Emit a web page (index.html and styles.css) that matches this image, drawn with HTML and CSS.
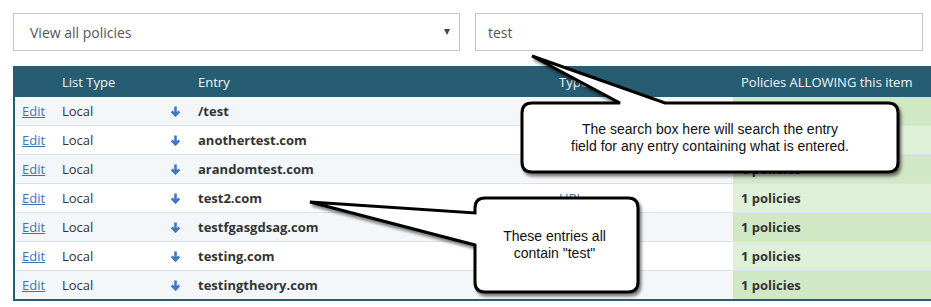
FILE: index.html
```html
<!DOCTYPE html>
<html lang="en">
<head>
    <meta charset="UTF-8">
    <title>Entries</title>
    <link rel="stylesheet" href="styles.css">
</head>
<body>
    <div class="page">
        <div class="filters">
            <div class="select-box">
                <span>View all policies</span>
                <span class="caret"></span>
            </div>
            <div class="search-box">test</div>
        </div>

        <table class="entries">
            <colgroup>
                <col class="c-edit">
                <col class="c-list">
                <col class="c-icon">
                <col class="c-entry">
                <col class="c-type">
                <col class="c-policies">
            </colgroup>
            <thead>
                <tr>
                    <th></th>
                    <th>List Type</th>
                    <th></th>
                    <th>Entry</th>
                    <th>Type</th>
                    <th>Policies ALLOWING this item</th>
                </tr>
            </thead>
            <tbody>
                <!-- cells that sit under the callouts are left empty -->
                <tr>
                    <td><a href="#">Edit</a></td><td>Local</td>
                    <td><svg class="down" viewBox="0 0 10 11"><path d="M5 0.5V9 M1.2 5.4L5 9.3L8.8 5.4"/></svg></td>
                    <td class="entry">/test</td><td></td><td class="allow"></td>
                </tr>
                <tr>
                    <td><a href="#">Edit</a></td><td>Local</td>
                    <td><svg class="down" viewBox="0 0 10 11"><path d="M5 0.5V9 M1.2 5.4L5 9.3L8.8 5.4"/></svg></td>
                    <td class="entry">anothertest.com</td><td></td><td class="allow"></td>
                </tr>
                <tr>
                    <td><a href="#">Edit</a></td><td>Local</td>
                    <td><svg class="down" viewBox="0 0 10 11"><path d="M5 0.5V9 M1.2 5.4L5 9.3L8.8 5.4"/></svg></td>
                    <td class="entry">arandomtest.com</td><td></td><td class="allow">1 policies</td>
                </tr>
                <tr>
                    <td><a href="#">Edit</a></td><td>Local</td>
                    <td><svg class="down" viewBox="0 0 10 11"><path d="M5 0.5V9 M1.2 5.4L5 9.3L8.8 5.4"/></svg></td>
                    <td class="entry">test2.com</td><td><a href="#">URL</a></td><td class="allow">1 policies</td>
                </tr>
                <tr>
                    <td><a href="#">Edit</a></td><td>Local</td>
                    <td><svg class="down" viewBox="0 0 10 11"><path d="M5 0.5V9 M1.2 5.4L5 9.3L8.8 5.4"/></svg></td>
                    <td class="entry">testfgasgdsag.com</td><td></td><td class="allow">1 policies</td>
                </tr>
                <tr>
                    <td><a href="#">Edit</a></td><td>Local</td>
                    <td><svg class="down" viewBox="0 0 10 11"><path d="M5 0.5V9 M1.2 5.4L5 9.3L8.8 5.4"/></svg></td>
                    <td class="entry">testing.com</td><td></td><td class="allow">1 policies</td>
                </tr>
                <tr>
                    <td><a href="#">Edit</a></td><td>Local</td>
                    <td><svg class="down" viewBox="0 0 10 11"><path d="M5 0.5V9 M1.2 5.4L5 9.3L8.8 5.4"/></svg></td>
                    <td class="entry">testingtheory.com</td><td></td><td class="allow">1 policies</td>
                </tr>
            </tbody>
        </table>
    </div>

    <!-- annotation callouts drawn over the screenshot -->
    <svg class="callouts" width="931" height="307" viewBox="0 0 931 307">
        <defs>
            <filter id="shadow" x="-10%" y="-10%" width="130%" height="140%">
                <feDropShadow dx="2" dy="3" stdDeviation="1.6" flood-color="#000" flood-opacity="0.5"/>
            </filter>
        </defs>
        <path filter="url(#shadow)" d="M532 103 L620 103 L532 56 L665 103 L888 103 Q898 103 898 113 L898 162 Q898 172 888 172 L532 172 Q522 172 522 162 L522 113 Q522 103 532 103 Z"/>
        <path filter="url(#shadow)" d="M485 198 L628 198 Q638 198 638 208 L638 282 Q638 292 628 292 L485 292 Q475 292 475 282 L475 245 L310 202 L475 213 L475 208 Q475 198 485 198 Z"/>
    </svg>
    <div class="note note-search">The search box here will search the entry<br>field for any entry containing what is entered.</div>
    <div class="note note-entries">These entries all<br>contain "test"</div>
</body>
</html>
```

FILE: styles.css
```css
body {
    margin: 0;
    padding: 0;
    font-family: "Open Sans", Arial, sans-serif;
    font-size: 13px;
    color: #333;
    background-color: #fff;
    overflow: hidden;
    position: relative;
    width: 931px;
    height: 307px;
}
.page {
    padding: 13px 0 0 13px;
}
.filters {
    display: flex;
    gap: 15px;
    margin-bottom: 15px;
}
.select-box,
.search-box {
    box-sizing: border-box;
    height: 38px;
    border: 1px solid #c4c8cc;
    background-color: #fff;
    font-size: 14px;
    color: #555;
    display: flex;
    align-items: center;
}
.select-box {
    width: 447px;
    padding: 0 9px 0 16px;
    justify-content: space-between;
}
.search-box {
    width: 448px;
    padding: 0 12px;
}
.caret {
    width: 0;
    height: 0;
    border-left: 3px solid transparent;
    border-right: 3px solid transparent;
    border-top: 6px solid #444;
    margin-top: -1px;
}
.entries {
    border-collapse: collapse;
    table-layout: fixed;
    width: 941px;
    border-left: 2px solid #265d72;
    border-bottom: 2px solid #265d72;
}
.c-edit { width: 40px; }
.c-list { width: 108px; }
.c-icon { width: 28px; }
.c-entry { width: 361px; }
.c-type { width: 182px; }
.c-policies { width: 222px; }
.entries th {
    background-color: #265d72;
    color: #f2f6f8;
    font-weight: normal;
    text-align: left;
    height: 31px;
    padding: 0 8px;
    white-space: nowrap;
}
.entries td {
    height: 28px;
    padding: 0 8px;
    white-space: nowrap;
    border-top: 1px solid #dde2e6;
}
.entries tbody tr:first-child td {
    border-top: none;
}
.entries td:first-child {
    padding-left: 7px;
}
.entries tbody tr:nth-child(odd) {
    background-color: #f4f7fa;
}
.entries a {
    color: #3b74b4;
    text-decoration: underline;
}
.entries td .down {
    display: block;
    width: 11px;
    height: 11px;
    fill: none;
    stroke: #3d78c0;
    stroke-width: 2.6;
}
.entry {
    font-weight: bold;
}
.entries td.allow {
    font-weight: bold;
    background-color: #dff0d8;
}
.entries tbody tr:nth-child(odd) td.allow {
    background-color: #d0e8c6;
}
.callouts {
    position: absolute;
    left: 0;
    top: 0;
    pointer-events: none;
}
.callouts path {
    fill: #fff;
    stroke: #000;
    stroke-width: 3;
    stroke-linejoin: miter;
}
.note {
    position: absolute;
    font-family: "Liberation Sans", Arial, sans-serif;
    font-size: 14px;
    line-height: 17px;
    color: #111;
    text-align: center;
}
.note-search {
    left: 522px;
    top: 121px;
    width: 376px;
}
.note-entries {
    left: 473px;
    top: 228px;
    width: 163px;
}
```
